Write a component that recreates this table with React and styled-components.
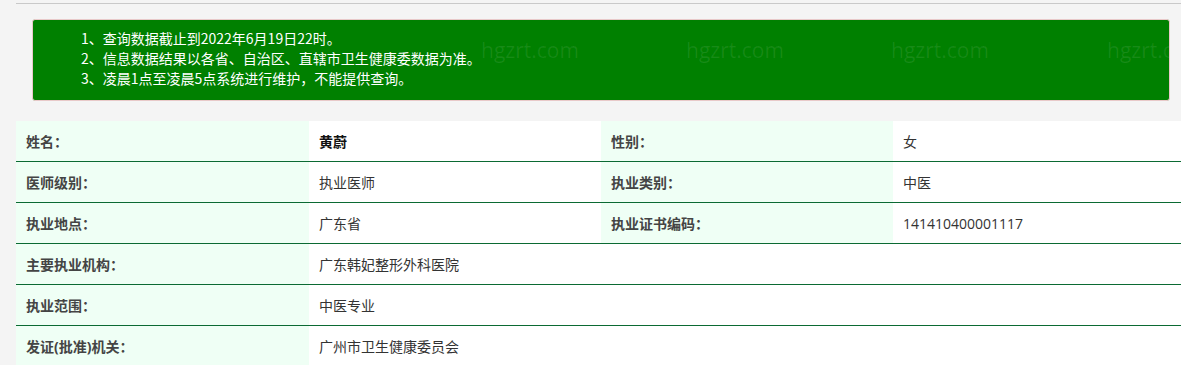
import React from 'react';
import styled, { createGlobalStyle } from 'styled-components';

const GlobalStyle = createGlobalStyle`
  html, body {
    margin: 0;
    padding: 0;
    background: #f4f4f4;
    font-family: 'Noto Sans CJK SC', 'Noto Sans', sans-serif;
    overflow: hidden;
  }
`;

const Page = styled.div`
  padding: 3px 0 0 16px;
`;

const TopRule = styled.div`
  height: 1px;
  background: #c9c9c9;
`;

const Notice = styled.div`
  position: relative;
  overflow: hidden;
  margin: 15px 11px 0 16px;
  padding: 8px 0 12px 48px;
  background: #008000;
  border: 1px solid #e8c9c9;
  border-radius: 3px;
  color: #ffffff;
  font-size: 14px;
  line-height: 20px;
`;

const NoticeLine = styled.div`
  position: relative;
  z-index: 1;
`;

const Watermark = styled.span`
  position: absolute;
  top: 20px;
  font-family: 'Open Sans', sans-serif;
  font-size: 21px;
  color: rgba(255, 255, 255, 0.09);
  pointer-events: none;
`;

const Table = styled.div`
  margin-top: 20px;
  display: grid;
  grid-template-columns: 293px 292px 292px 1fr;
  background: #ffffff;
`;

const Cell = styled.div`
  height: 40px;
  display: flex;
  align-items: center;
  padding-left: 10px;
  font-family: 'Open Sans', 'Noto Sans CJK SC', sans-serif;
  font-size: 14px;
  color: ${(p) => (p.$strong ? '#111' : '#333')};
  font-weight: ${(p) => (p.$strong ? 700 : 400)};
  background: #ffffff;
  border-bottom: ${(p) => (p.$last ? 'none' : '1px solid #0b6a33')};
  grid-column: ${(p) => (p.$wide ? 'span 3' : 'auto')};
`;

const Label = styled(Cell)`
  background: #effff5;
  color: #444;
  font-weight: 700;
`;

const notes = [
  '1、查询数据截止到2022年6月19日22时。',
  '2、信息数据结果以各省、自治区、直辖市卫生健康委数据为准。',
  '3、凌晨1点至凌晨5点系统进行维护，不能提供查询。',
];

const marks = [448, 653, 858, 1074];

const App = () => (
  <>
    <GlobalStyle />
    <Page>
      <TopRule />
      <Notice>
        {marks.map((x) => (
          <Watermark key={x} style={{ left: x }}>
            hgzrt.com
          </Watermark>
        ))}
        {notes.map((n) => (
          <NoticeLine key={n}>{n}</NoticeLine>
        ))}
      </Notice>
      <Table>
        <Label>姓名：</Label>
        <Cell $strong>黄蔚</Cell>
        <Label>性别：</Label>
        <Cell>女</Cell>

        <Label>医师级别：</Label>
        <Cell>执业医师</Cell>
        <Label>执业类别：</Label>
        <Cell>中医</Cell>

        <Label>执业地点：</Label>
        <Cell>广东省</Cell>
        <Label>执业证书编码：</Label>
        <Cell>141410400001117</Cell>

        <Label>主要执业机构：</Label>
        <Cell $wide>广东韩妃整形外科医院</Cell>

        <Label>执业范围：</Label>
        <Cell $wide>中医专业</Cell>

        <Label $last>发证(批准)机关：</Label>
        <Cell $wide $last>广州市卫生健康委员会</Cell>
      </Table>
    </Page>
  </>
);

export default App;
